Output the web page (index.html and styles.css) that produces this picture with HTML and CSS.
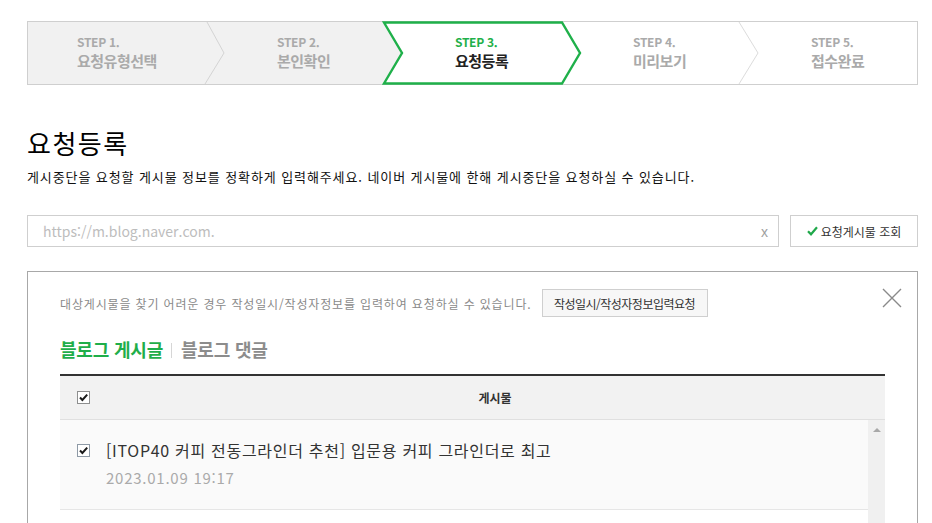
FILE: index.html
```html
<!DOCTYPE html>
<html lang="ko">
<head>
<meta charset="utf-8">
<title>요청등록</title>
<link rel="stylesheet" href="styles.css">
</head>
<body>
<div class="page">
  <div class="steps">
    <svg class="steps-bg" width="891" height="64" viewBox="0 0 891 64">
      <rect x="0.5" y="0.5" width="890" height="63" fill="#fff" stroke="#cfcfcf"/>
      <polygon points="1,1 357,1 375,32 357,63 1,63" fill="#f1f1f1"/>
      <polyline points="180,1 197,32 178,63" fill="none" stroke="#d4d4d4"/>
      <polyline points="712,1 731,32 712,63" fill="none" stroke="#dcdcdc"/>
      <polygon points="357,1.5 535,1.5 553,32 535,62.5 357,62.5 375,32" fill="#fff" stroke="#1fb04a" stroke-width="2.4" stroke-linejoin="miter"/>
    </svg>
    <div class="step first"><span class="num">STEP 1.</span><span class="name">요청유형선택</span></div>
    <div class="step"><span class="num">STEP 2.</span><span class="name">본인확인</span></div>
    <div class="step current"><span class="num">STEP 3.</span><span class="name">요청등록</span></div>
    <div class="step"><span class="num">STEP 4.</span><span class="name">미리보기</span></div>
    <div class="step"><span class="num">STEP 5.</span><span class="name">접수완료</span></div>
  </div>

  <h1 class="title">요청등록</h1>
  <p class="desc">게시중단을 요청할 게시물 정보를 정확하게 입력해주세요. 네이버 게시물에 한해 게시중단을 요청하실 수 있습니다.</p>

  <div class="search">
    <div class="url-input">
      <span class="placeholder">https://m.blog.naver.com.</span>
      <span class="clear">x</span>
    </div>
    <button class="btn-lookup" type="button">
      <svg class="ico-check" width="11" height="10" viewBox="0 0 11 10"><path d="M1 5.2 L4 8.3 L10 1.3" fill="none" stroke="#1fa84a" stroke-width="2.2"/></svg>
      <span>요청게시물 조회</span>
    </button>
  </div>

  <div class="panel">
    <svg class="close" width="20" height="20" viewBox="0 0 20 20"><path d="M1 1 L19 19 M19 1 L1 19" stroke="#8a8a8a" stroke-width="1.4" fill="none"/></svg>
    <div class="notice">
      <span class="notice-text">대상게시물을 찾기 어려운 경우 작성일시/작성자정보를 입력하여 요청하실 수 있습니다.</span>
      <button class="btn-manual" type="button">작성일시/작성자정보입력요청</button>
    </div>
    <div class="tabs">
      <span class="tab on">블로그 게시글</span>
      <span class="tab-bar"></span>
      <span class="tab">블로그 댓글</span>
    </div>
    <div class="table">
      <div class="thead">
        <div class="col-check"><span class="cb"><svg width="11" height="11" viewBox="0 0 11 11"><path d="M2 5.5 L4.4 8 L9.2 2.6" fill="none" stroke="#1a1a1a" stroke-width="2"/></svg></span></div>
        <div class="th">게시물</div>
      </div>
      <div class="tbody">
        <div class="rows">
          <div class="row">
            <div class="col-check"><span class="cb row-cb"><svg width="11" height="11" viewBox="0 0 11 11"><path d="M2 5.5 L4.4 8 L9.2 2.6" fill="none" stroke="#1a1a1a" stroke-width="2"/></svg></span></div>
            <div class="info">
              <div class="subj">[ITOP40 커피 전동그라인더 추천] 입문용 커피 그라인더로 최고</div>
              <div class="date">2023.01.09 19:17</div>
            </div>
          </div>
        </div>
        <div class="scrollbar"><span class="up"></span></div>
      </div>
    </div>
  </div>
</div>
</body>
</html>
```

FILE: styles.css
```css
* { box-sizing: border-box; }
html, body { margin: 0; padding: 0; background: #fff; }
body {
  font-family: "Noto Sans CJK KR", "Noto Sans", sans-serif;
  color: #222;
  overflow: hidden;
}
.page {
  width: 932px;
  padding: 21px 14px 0 27px;
}

/* steps */
.steps {
  position: relative;
  width: 891px;
  height: 64px;
  display: flex;
}
.steps-bg {
  position: absolute;
  left: 0;
  top: 0;
}
.step {
  position: relative;
  width: 178px;
  display: flex;
  flex-direction: column;
  justify-content: center;
  padding-left: 72px;
  color: #aaa;
}
.step.first { padding-left: 50px; }
.step:last-child { width: 179px; }
.step .num {
  font-size: 12px;
  line-height: 14px;
  font-weight: 700;
  letter-spacing: -0.3px;
}
.step .name {
  font-size: 15px;
  line-height: 20px;
  font-weight: 700;
  letter-spacing: -0.5px;
  margin-top: 2px;
}
.step.current .num { color: #1fb04a; }
.step.current .name { color: #222; }

/* heading */
.title {
  margin: 43px 0 0;
  font-size: 26px;
  line-height: 30px;
  font-weight: 400;
  color: #000;
  letter-spacing: 1.5px;
}
.desc {
  margin: 10px 0 0;
  font-size: 13px;
  line-height: 18px;
  color: #111;
  letter-spacing: 0.9px;
}

/* search */
.search {
  display: flex;
  gap: 11px;
  margin-top: 29px;
  height: 32px;
}
.url-input {
  width: 752px;
  height: 32px;
  border: 1px solid #cfcfcf;
  display: flex;
  align-items: center;
  padding: 0 10px 0 15px;
}
.placeholder {
  font-size: 14px;
  color: #bdbdbd;
  flex: 1;
  letter-spacing: 0;
}
.clear {
  font-family: "Liberation Sans", sans-serif;
  font-size: 14px;
  color: #a0a0a0;
  margin-top: 2px;
}
.btn-lookup {
  width: 128px;
  height: 32px;
  border: 1px solid #cfcfcf;
  background: #fff;
  display: flex;
  align-items: center;
  justify-content: center;
  gap: 3px;
  padding: 0;
  font-family: "Noto Sans CJK KR", sans-serif;
  font-size: 12px;
  color: #333;
  letter-spacing: 0;
}

/* panel */
.panel {
  position: relative;
  margin-top: 24px;
  width: 891px;
  height: 260px;
  border: 1px solid #a8a8a8;
  border-bottom: none;
  padding: 17px 32px 0 32px;
}
.close {
  position: absolute;
  right: 15px;
  top: 16px;
}
.notice {
  display: flex;
  align-items: center;
  height: 28px;
}
.notice-text {
  font-size: 12px;
  color: #8a8a8a;
  letter-spacing: 0.85px;
}
.btn-manual {
  margin-left: 10px;
  height: 28px;
  width: 166px;
  padding: 0;
  border: 1px solid #cfcfcf;
  background: #f7f7f7;
  font-family: "Noto Sans CJK KR", sans-serif;
  font-size: 12px;
  color: #333;
  letter-spacing: -0.5px;
}
.tabs {
  display: flex;
  align-items: center;
  margin-top: 20px;
  height: 24px;
}
.tab {
  font-size: 18px;
  line-height: 24px;
  font-weight: 700;
  color: #8c8c8c;
  letter-spacing: -0.2px;
}
.tab.on { color: #1fae4a; }
.tab-bar {
  width: 1px;
  height: 15px;
  background: #d6d6d6;
  margin: 2px 9px 0 8px;
}

/* table */
.table {
  margin-top: 13px;
  border-top: 2px solid #333;
}
.thead {
  display: flex;
  align-items: center;
  height: 44px;
  background: #f2f2f2;
  border-bottom: 1px solid #e0e0e0;
}
.col-check {
  width: 46px;
  flex: none;
  padding-left: 17px;
  display: flex;
}
.cb {
  width: 13px;
  height: 13px;
  border: 1px solid #8e8f8f;
  background: #fff;
  display: flex;
  align-items: center;
  justify-content: center;
}
.th {
  flex: 1;
  text-align: center;
  font-size: 12px;
  font-weight: 700;
  color: #333;
  margin-left: -1px;
}
.tbody {
  display: flex;
  height: 110px;
}
.rows {
  flex: 1;
  background: #fff;
}
.row {
  display: flex;
  background: #fafafa;
  border-bottom: 1px solid #e6e6e6;
  padding: 19px 0 21px;
}
.row .col-check { padding-top: 5px; align-items: flex-start; }
.row-cb { border-color: #8e9aa6; }
.info { flex: 1; }
.subj {
  font-size: 16px;
  line-height: 22px;
  color: #333;
  letter-spacing: 0.7px;
}
.date {
  margin-top: 7px;
  font-size: 15px;
  line-height: 20px;
  color: #aaa;
  letter-spacing: 0.75px;
}
.scrollbar {
  width: 17px;
  flex: none;
  background: #f0f0f0;
  display: flex;
  justify-content: center;
  padding-top: 8px;
}
.up {
  width: 0;
  height: 0;
  border-left: 4px solid transparent;
  border-right: 4px solid transparent;
  border-bottom: 4px solid #a8a8a8;
}
```
